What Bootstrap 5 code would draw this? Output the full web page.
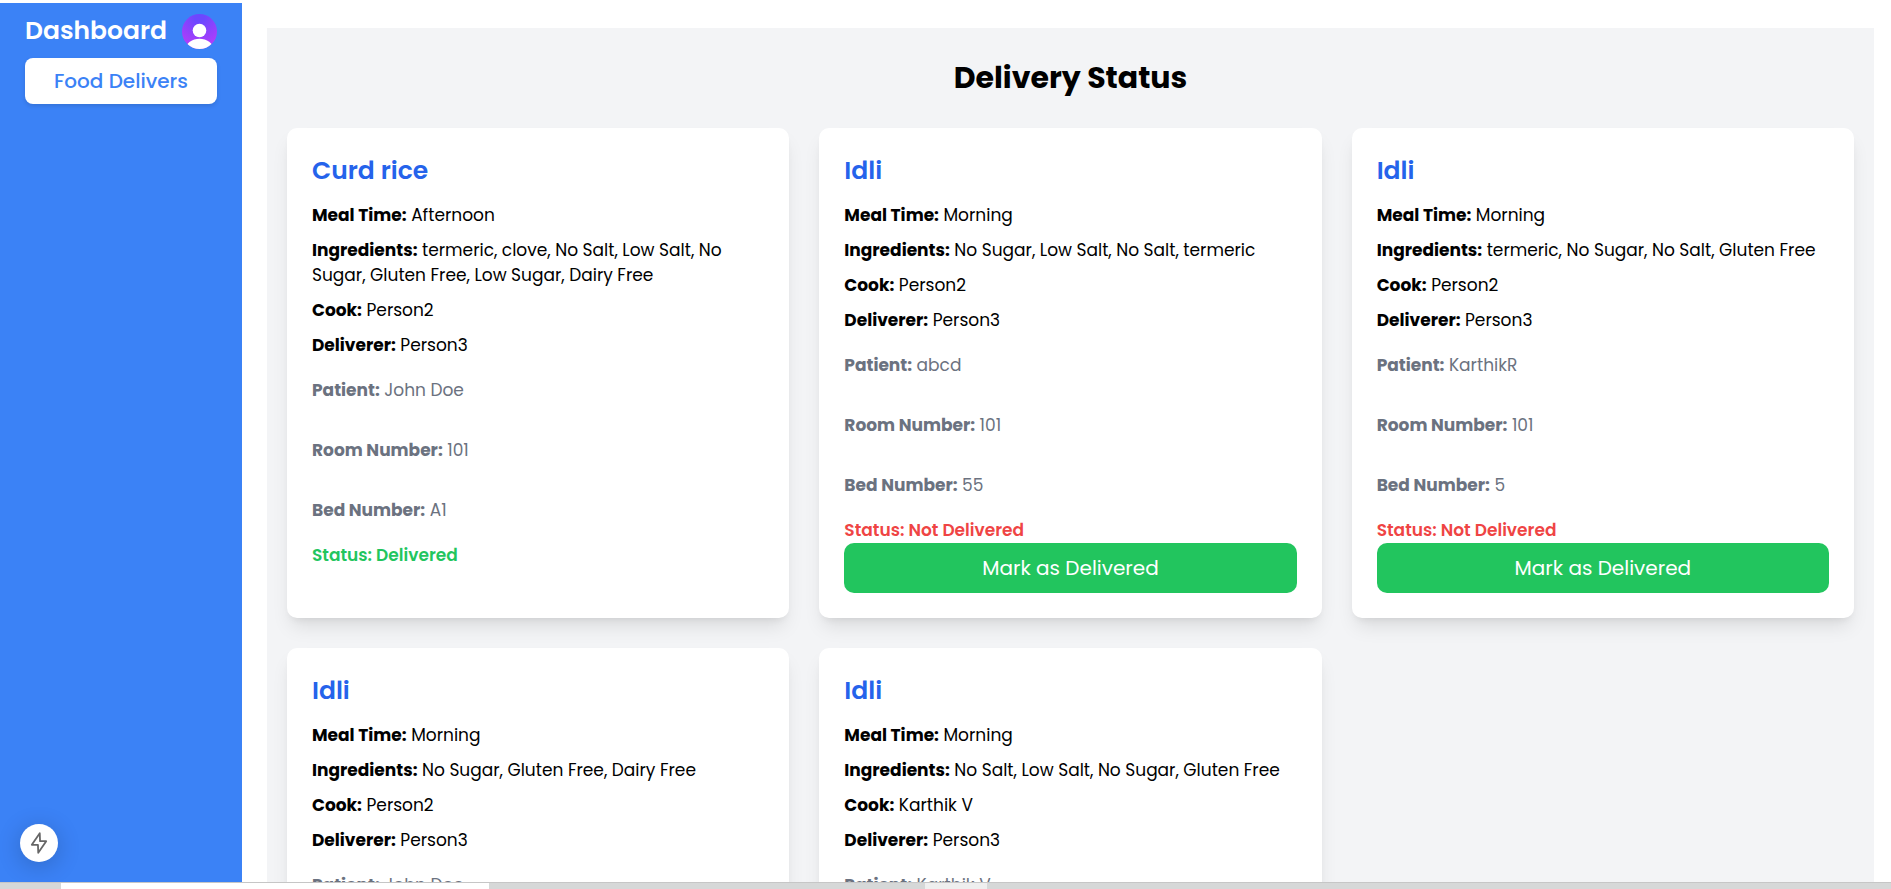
<!DOCTYPE html>
<html lang="en">
<head>
<meta charset="utf-8">
<meta name="viewport" content="width=device-width, initial-scale=1">
<title>Delivery Status</title>
<link href="https://cdn.jsdelivr.net/npm/bootstrap@5.3.0/dist/css/bootstrap.min.css" rel="stylesheet">
<style>
  body { font-family: Poppins, Inter, sans-serif; font-size: 17px; line-height: 25px; color: #000; background: #fff; }
  .app-shell { height: 100vh; padding-top: 3px; }
  .side { width: 242px; padding: 8px 25px; background: #3b82f6; }
  .side-title { font-size: 25px; line-height: 40px; font-weight: 600; color: #fff; }
  .avatar { width: 35px; height: 35px; }
  .side-link { margin-top: 7px; padding: 8px; border-radius: 8px; font-size: 20px; line-height: 30px; font-weight: 500; color: #3b82f6; background: #fff; box-shadow: 0 2px 4px rgba(0,0,0,.12); }
  .page { padding: 25px 17px 0 25px; }
  .panel { padding: 30px 20px; background: #f3f4f6; }
  .panel-title { margin-bottom: 30px; font-size: 30px; line-height: 40px; font-weight: 700; }
  .meals { --bs-gutter-x: 30px; --bs-gutter-y: 30px; }
  .meal { padding: 25px; border: 0; border-radius: 10px; box-shadow: 0 12px 19px -4px rgba(0,0,0,.1), 0 5px 8px -5px rgba(0,0,0,.1); color: #000; }
  .meal h2 { margin-bottom: 15px; font-size: 25px; line-height: 35px; font-weight: 600; color: #2563eb; }
  .meal p { margin-bottom: 10px; }
  .meal .who { margin: 10px 0 35px; color: #6b7280; }
  .meal .where { margin-bottom: 35px; color: #6b7280; }
  .meal .bed { margin-bottom: 20px; color: #6b7280; }
  .meal .state { margin: 0; font-weight: 600; }
  .is-done { color: #22c55e; }
  .is-open { color: #ef4444; }
  .btn-mark { padding: 10px; border: 0; border-radius: 10px; font-size: 20px; line-height: 30px; color: #fff; background: #22c55e; }
  .quick { left: 20px; bottom: 20px; width: 38px; height: 38px; background: #fff; box-shadow: 0 4px 24px rgba(0,0,0,.2); }
  .dock { height: 7px; padding-left: 61px; background: #d6d8d8; border-top: 1px solid #c6c6c6; }
  .dock-tab { width: 428px; background: #fff; }
  .dock-item { width: 62px; margin-left: 436px; background: #efefef; }
</style>
</head>
<body>
<div class="app-shell d-flex flex-column overflow-hidden">
  <div class="d-flex flex-grow-1 overflow-hidden position-relative">
    <aside class="side flex-shrink-0">
      <div class="d-flex justify-content-between align-items-center">
        <span class="side-title">Dashboard</span>
        <svg class="avatar" viewBox="0 0 36 36" role="img" aria-label="Account">
          <defs>
            <radialGradient id="av" cx="0.5" cy="0.1" r="0.9"><stop offset="0.15" stop-color="#6c47ff"/><stop offset="1" stop-color="#b93bfa"/></radialGradient>
            <clipPath id="avc"><circle cx="18" cy="18" r="18"/></clipPath>
          </defs>
          <g clip-path="url(#avc)"><rect width="36" height="36" fill="url(#av)"/><circle cx="18" cy="17" r="7" fill="#fff"/><ellipse cx="18" cy="36" rx="14" ry="10.500" fill="#fff"/></g>
        </svg>
      </div>
      <a href="#" class="side-link d-block text-center text-decoration-none">Food Delivers</a>
    </aside>
    <main class="page flex-grow-1 overflow-hidden">
      <section class="panel">
        <h1 class="panel-title text-center">Delivery Status</h1>
        <div class="meals row row-cols-3">
          <div class="col"><article class="meal card h-100">
            <h2>Curd rice</h2>
            <p><b>Meal Time:</b> Afternoon</p>
            <p><b>Ingredients:</b> termeric, clove, No Salt, Low Salt, No Sugar, Gluten Free, Low Sugar, Dairy Free</p>
            <p><b>Cook:</b> Person2</p>
            <p><b>Deliverer:</b> Person3</p>
            <p class="who"><b>Patient:</b> John Doe</p>
            <p class="where"><b>Room Number:</b> 101</p>
            <p class="bed"><b>Bed Number:</b> A1</p>
            <p class="state is-done">Status: Delivered</p>
          </article></div>
          <div class="col"><article class="meal card h-100">
            <h2>Idli</h2>
            <p><b>Meal Time:</b> Morning</p>
            <p><b>Ingredients:</b> No Sugar, Low Salt, No Salt, termeric</p>
            <p><b>Cook:</b> Person2</p>
            <p><b>Deliverer:</b> Person3</p>
            <p class="who"><b>Patient:</b> abcd</p>
            <p class="where"><b>Room Number:</b> 101</p>
            <p class="bed"><b>Bed Number:</b> 55</p>
            <p class="state is-open">Status: Not Delivered</p>
            <button type="button" class="btn btn-mark">Mark as Delivered</button>
          </article></div>
          <div class="col"><article class="meal card h-100">
            <h2>Idli</h2>
            <p><b>Meal Time:</b> Morning</p>
            <p><b>Ingredients:</b> termeric, No Sugar, No Salt, Gluten Free</p>
            <p><b>Cook:</b> Person2</p>
            <p><b>Deliverer:</b> Person3</p>
            <p class="who"><b>Patient:</b> KarthikR</p>
            <p class="where"><b>Room Number:</b> 101</p>
            <p class="bed"><b>Bed Number:</b> 5</p>
            <p class="state is-open">Status: Not Delivered</p>
            <button type="button" class="btn btn-mark">Mark as Delivered</button>
          </article></div>
          <div class="col"><article class="meal card h-100">
            <h2>Idli</h2>
            <p><b>Meal Time:</b> Morning</p>
            <p><b>Ingredients:</b> No Sugar, Gluten Free, Dairy Free</p>
            <p><b>Cook:</b> Person2</p>
            <p><b>Deliverer:</b> Person3</p>
            <p class="who"><b>Patient:</b> John Doe</p>
          </article></div>
          <div class="col"><article class="meal card h-100">
            <h2>Idli</h2>
            <p><b>Meal Time:</b> Morning</p>
            <p><b>Ingredients:</b> No Salt, Low Salt, No Sugar, Gluten Free</p>
            <p><b>Cook:</b> Karthik V</p>
            <p><b>Deliverer:</b> Person3</p>
            <p class="who"><b>Patient:</b> Karthik V</p>
          </article></div>
        </div>
      </section>
    </main>
    <button type="button" class="quick btn position-absolute rounded-circle border-0 p-0 d-flex align-items-center justify-content-center" aria-label="Quick actions">
      <svg width="24" height="24" viewBox="0 0 16 16" fill="none" stroke="#666" stroke-width="1.200" stroke-linejoin="round"><path d="M8.500 1.500 L3.200 9.200 H7.300 L7.500 14.500 L12.800 6.800 H8.700 Z"/></svg>
    </button>
  </div>
  <footer class="dock d-flex flex-shrink-0"><div class="dock-tab"></div><div class="dock-item"></div></footer>
</div>
<script src="https://cdn.jsdelivr.net/npm/bootstrap@5.3.0/dist/js/bootstrap.bundle.min.js"></script>
</body>
</html>
